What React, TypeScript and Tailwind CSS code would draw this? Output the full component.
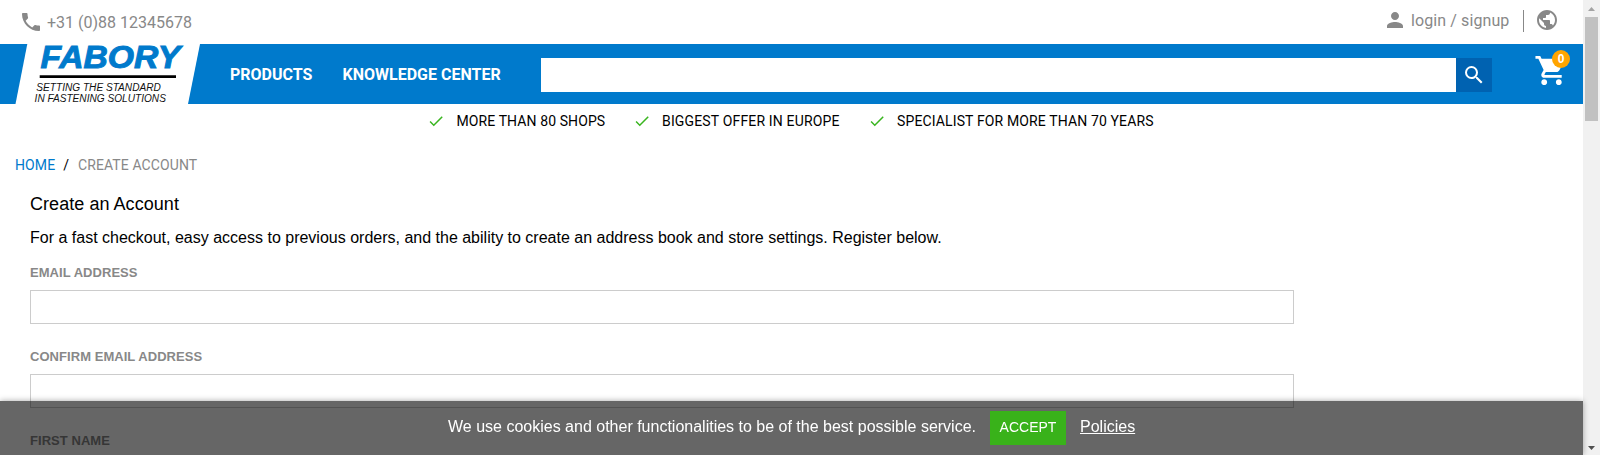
import React from "react";
import { MdCheck, MdPerson, MdPhone, MdPublic, MdSearch, MdShoppingCart } from "react-icons/md";

function TopBar() {
  return (
    <div className="flex h-11 items-start justify-between pl-[19px] pr-[24px] font-['Roboto',sans-serif] text-base leading-6 text-[#888888]">
      <a className="flex pt-[10px]">
        <MdPhone size={24} />
        <span className="ml-1 mt-px">+31 (0)88 12345678</span>
      </a>
      <div className="flex pt-2">
        <a className="flex">
          <MdPerson size={24} />
          <span className="ml-1 mt-px w-[98px] tracking-[0.1px] whitespace-nowrap">login / signup</span>
        </a>
        <span className="ml-[14px] mt-[2px] h-[22px] w-px bg-[#888888]" />
        <MdPublic size={24} className="ml-[11px]" />
      </div>
    </div>
  );
}

function Logo() {
  return (
    <svg width="185" height="60" viewBox="0 0 185 60" className="ml-[15px] shrink-0 overflow-visible">
      <path d="M12.3 0H185L173 60H0.5Z" fill="#fff" />
      <g fontFamily="Liberation Sans, sans-serif" fontStyle="italic">
        <text x="25.6" y="24.4" fontSize="32" fontWeight="bold" fill="#007acc" stroke="#007acc" strokeWidth="1" textLength="139.5" lengthAdjust="spacingAndGlyphs">FABORY</text>
        <text x="21.3" y="47" fontSize="10" fill="#111" textLength="124.5" lengthAdjust="spacingAndGlyphs">SETTING THE STANDARD</text>
        <text x="19.6" y="58" fontSize="10" fill="#111" textLength="131.3" lengthAdjust="spacingAndGlyphs">IN FASTENING SOLUTIONS</text>
      </g>
      <path d="M24.7 31.3H161V34.1H24.7Z" fill="#000" />
    </svg>
  );
}

function NavBar() {
  return (
    <header className="flex h-[60px] items-start bg-[#007acc] font-['Roboto',sans-serif] text-white">
      <Logo />
      <nav className="flex pt-[19px] text-base leading-6 font-bold whitespace-nowrap">
        <a className="ml-[30px] w-[112.5px]">PRODUCTS</a>
        <a className="w-[198.5px]">KNOWLEDGE CENTER</a>
      </nav>
      <form className="mt-[14px] flex h-[34px] w-[951px]">
        <input className="h-full min-w-0 flex-1 bg-white px-2 text-black outline-none" />
        <button type="button" className="flex w-9 items-start justify-center bg-[#0062b1] pt-[5px]">
          <MdSearch size={24} />
        </button>
      </form>
      <a className="relative ml-[41.5px] mt-[9px]">
        <MdShoppingCart size={35} />
        <span className="absolute left-[18.5px] -top-[3px] flex size-[18px] items-center justify-center rounded-full bg-[#ffa500] font-['Liberation_Sans',sans-serif] text-xs leading-none font-bold">0</span>
      </a>
    </header>
  );
}

function Usps() {
  return (
    <ul className="flex h-[34px] items-start pl-[427px] pt-2 font-['Roboto',sans-serif] text-sm leading-[18px] whitespace-nowrap text-black">
      <li className="flex w-[205.5px] tracking-[0.1px]"><MdCheck size={18} className="mr-[11.5px] text-[#39b51f]" />MORE THAN 80 SHOPS</li>
      <li className="flex w-[235px] tracking-[0.16px]"><MdCheck size={18} className="mr-[11.5px] text-[#39b51f]" />BIGGEST OFFER IN EUROPE</li>
      <li className="flex tracking-[0.13px]"><MdCheck size={18} className="mr-[11.5px] text-[#39b51f]" />SPECIALIST FOR MORE THAN 70 YEARS</li>
    </ul>
  );
}

function Field({ label }: { label: string }) {
  return (
    <label className="block h-[84px]">
      <span className="block h-[26px] pt-px text-[13px] leading-4 font-bold tracking-[0.05px] text-[#888888]">{label}</span>
      <input className="block h-[34px] w-[1264px] border border-[#cccccc] bg-white px-2 outline-none" />
    </label>
  );
}

function CookieBar() {
  return (
    <div className="fixed bottom-0 left-0 flex h-[54px] w-[1583px] items-start bg-black/60 pl-[448px] pt-[10px] text-base leading-[34px] whitespace-nowrap text-white shadow-[0_0_6px_rgba(0,0,0,0.35)]">
      <span className="-mt-[1px] w-[542px]">We use cookies and other functionalities to be of the best possible service.</span>
      <button className="h-[34px] w-[76px] bg-[#39b21a] pb-[2px] text-sm leading-8">ACCEPT</button>
      <a className="-mt-[1px] ml-[14px] underline">Policies</a>
    </div>
  );
}

function Scrollbar() {
  return (
    <div className="flex h-full w-[17px] flex-col items-center bg-[#f1f1f1]">
      <svg width="17" height="17" className="shrink-0"><path d="M5 11H12L8.5 7Z" fill="#a3a3a3" /></svg>
      <div className="h-[104px] w-[13px] bg-[#c1c1c1]" />
      <svg width="17" height="17" className="mt-auto shrink-0"><path d="M5 8H12L8.5 12Z" fill="#505050" /></svg>
    </div>
  );
}

export default function App() {
  return (
    <div className="flex h-[455px] w-[1600px] overflow-hidden bg-white font-['Liberation_Sans',sans-serif] text-black">
      <div className="h-full w-[1583px] overflow-hidden">
        <TopBar />
        <NavBar />
        <Usps />
        <nav className="flex h-[56px] pl-[15px] pt-[18px] font-['Roboto',sans-serif] text-sm leading-[18px]">
          <a className="tracking-[0.1px] text-[#007acc]">HOME</a>
          <span className="ml-2 mr-[9px]">/</span>
          <span className="tracking-[0.1px] text-[#888888]">CREATE ACCOUNT</span>
        </nav>
        <main className="pl-[30px]">
          <h1 className="h-[33px] text-lg leading-5 tracking-[0.05px]">Create an Account</h1>
          <p className="h-[37px] text-base leading-[22px]">For a fast checkout, easy access to previous orders, and the ability to create an address book and store settings. Register below.</p>
          <Field label="EMAIL ADDRESS" />
          <Field label="CONFIRM EMAIL ADDRESS" />
          <Field label="FIRST NAME" />
        </main>
      </div>
      <Scrollbar />
      <CookieBar />
    </div>
  );
}
